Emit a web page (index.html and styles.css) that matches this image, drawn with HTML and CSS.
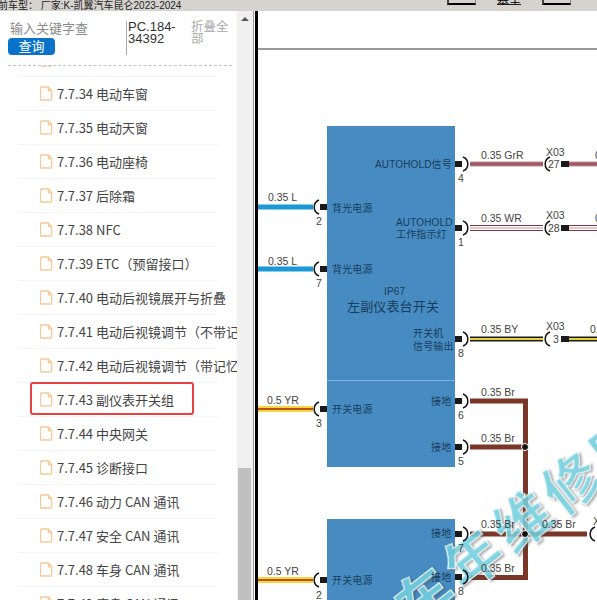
FILE: index.html
```html
<!DOCTYPE html>
<html lang="zh-CN">
<head>
    <meta charset="UTF-8">
    <meta name="viewport" content="width=device-width, initial-scale=1.0">
    <title>前车型</title>
    <link rel="stylesheet" href="styles.css">
</head>
<body>
    <svg class="icon-defs" width="0" height="0">
        <symbol id="file-icon" viewBox="0 0 14 16">
            <path d="M1.500 1h7.500l3.500 3.800v9.200a1 1 0 0 1-1 1h-10a1 1 0 0 1-1-1v-12a1 1 0 0 1 1-1z M9 1v3.800h3.500" fill="none" stroke="#f5c998" stroke-width="1.500"/>
        </symbol>
    </svg>

    <div class="top-bar">
        <div class="top-title">前车型： 厂家:K-凯翼汽车昆仑2023-2024</div>
        <div class="top-tools">
            <span class="tool-btn"></span>
            <span class="tool-text">基里</span>
            <span class="tool-btn"></span>
        </div>
    </div>

    <div class="main">
        <div class="sidebar">
            <div class="search-bar">
                <div class="search-box">
                    <div class="search-hint">输入关键字查</div>
                    <button class="search-btn">查询</button>
                </div>
                <div class="search-code">PC.184-34392</div>
                <div class="search-fold">折叠全部</div>
            </div>
            <div class="tree">
                <div class="tree-row tree-row-cut"><svg class="file-icon"><use href="#file-icon"/></svg></div>
                <div class="tree-row"><svg class="file-icon"><use href="#file-icon"/></svg><span>7.7.34 电动车窗</span></div>
                <div class="tree-row"><svg class="file-icon"><use href="#file-icon"/></svg><span>7.7.35 电动天窗</span></div>
                <div class="tree-row"><svg class="file-icon"><use href="#file-icon"/></svg><span>7.7.36 电动座椅</span></div>
                <div class="tree-row"><svg class="file-icon"><use href="#file-icon"/></svg><span>7.7.37 后除霜</span></div>
                <div class="tree-row"><svg class="file-icon"><use href="#file-icon"/></svg><span>7.7.38 NFC</span></div>
                <div class="tree-row"><svg class="file-icon"><use href="#file-icon"/></svg><span>7.7.39 ETC（预留接口）</span></div>
                <div class="tree-row"><svg class="file-icon"><use href="#file-icon"/></svg><span>7.7.40 电动后视镜展开与折叠</span></div>
                <div class="tree-row"><svg class="file-icon"><use href="#file-icon"/></svg><span>7.7.41 电动后视镜调节（不带记忆）</span></div>
                <div class="tree-row"><svg class="file-icon"><use href="#file-icon"/></svg><span>7.7.42 电动后视镜调节（带记忆）</span></div>
                <div class="tree-row tree-row-active"><svg class="file-icon"><use href="#file-icon"/></svg><span>7.7.43 副仪表开关组</span></div>
                <div class="tree-row"><svg class="file-icon"><use href="#file-icon"/></svg><span>7.7.44 中央网关</span></div>
                <div class="tree-row"><svg class="file-icon"><use href="#file-icon"/></svg><span>7.7.45 诊断接口</span></div>
                <div class="tree-row"><svg class="file-icon"><use href="#file-icon"/></svg><span>7.7.46 动力 CAN 通讯</span></div>
                <div class="tree-row"><svg class="file-icon"><use href="#file-icon"/></svg><span>7.7.47 安全 CAN 通讯</span></div>
                <div class="tree-row"><svg class="file-icon"><use href="#file-icon"/></svg><span>7.7.48 车身 CAN 通讯</span></div>
                <div class="tree-row"><svg class="file-icon"><use href="#file-icon"/></svg><span>7.7.49 底盘 CAN 通讯</span></div>
            </div>
        </div>

        <div class="scrollbar">
            <div class="scroll-up"></div>
            <div class="scroll-thumb"></div>
        </div>

        <div class="diagram">
            <svg class="diagram-svg" viewBox="258 11 339 589" width="339" height="589">
                <defs>
                    <g id="pin-right">
                        <rect x="0" y="-3" width="7" height="6" fill="#1a1a1a"/>
                        <path d="M8 -7A7.500 7.500 0 0 1 8 7" fill="none" stroke="#111" stroke-width="1.500"/>
                    </g>
                    <g id="pin-left">
                        <rect x="-7" y="-3" width="7" height="6" fill="#1a1a1a"/>
                        <path d="M-8 -7A7.500 7.500 0 0 0 -8 7" fill="none" stroke="#111" stroke-width="1.500"/>
                    </g>
                </defs>

                <line x1="258" y1="49" x2="597" y2="49" stroke="#333" stroke-width="1"/>

                <!-- модули -->
                <rect x="327" y="126" width="128" height="341" fill="#468cc2"/>
                <line x1="327" y1="380.500" x2="455" y2="380.500" stroke="#7cb0d8"/>
                <rect x="327" y="519" width="128" height="81" fill="#468cc2"/>

                <!-- провода слева -->
                <line x1="258" y1="207" x2="313" y2="207" stroke="#1b98d6" stroke-width="5"/>
                <line x1="258" y1="269" x2="313" y2="269" stroke="#1b98d6" stroke-width="5"/>
                <g class="wire-yr">
                    <line x1="258" y1="409" x2="313" y2="409" class="wire-outer"/>
                    <line x1="258" y1="409" x2="313" y2="409" class="wire-inner"/>
                    <line x1="258" y1="580" x2="313" y2="580" class="wire-outer"/>
                    <line x1="258" y1="580" x2="313" y2="580" class="wire-inner"/>
                </g>

                <!-- провода справа -->
                <g class="wire-grr">
                    <line x1="470" y1="164" x2="543" y2="164" class="wire-outer"/>
                    <line x1="470" y1="164" x2="543" y2="164" class="wire-inner"/>
                    <line x1="569" y1="164" x2="597" y2="164" class="wire-outer"/>
                    <line x1="569" y1="164" x2="597" y2="164" class="wire-inner"/>
                </g>
                <g class="wire-wr">
                    <line x1="470" y1="228" x2="543" y2="228" class="wire-outer"/>
                    <line x1="470" y1="228" x2="543" y2="228" class="wire-mid"/>
                    <line x1="470" y1="228" x2="543" y2="228" class="wire-inner"/>
                    <line x1="569" y1="228" x2="597" y2="228" class="wire-outer"/>
                    <line x1="569" y1="228" x2="597" y2="228" class="wire-mid"/>
                    <line x1="569" y1="228" x2="597" y2="228" class="wire-inner"/>
                </g>
                <g class="wire-by">
                    <line x1="470" y1="339" x2="543" y2="339" class="wire-outer"/>
                    <line x1="470" y1="339" x2="543" y2="339" class="wire-inner"/>
                    <line x1="569" y1="339" x2="597" y2="339" class="wire-outer"/>
                    <line x1="569" y1="339" x2="597" y2="339" class="wire-inner"/>
                </g>
                <path class="wire-br" d="M470 401H525.500V577.500H470M470 447H525.500M470 534H587"/>

                <text class="watermark" x="473" y="554" transform="rotate(-38 473 554)">风信车年维修网</text>

                <circle cx="525" cy="447" r="3.500" fill="#111" stroke="#fff" stroke-width="1"/>
                <circle cx="525" cy="534" r="3.500" fill="#111" stroke="#fff" stroke-width="1"/>

                <!-- разъёмы -->
                <use href="#pin-left" x="327" y="207"/>
                <use href="#pin-left" x="327" y="269"/>
                <use href="#pin-left" x="327" y="409"/>
                <use href="#pin-left" x="327" y="580"/>
                <use href="#pin-right" x="455" y="164"/>
                <use href="#pin-right" x="455" y="228"/>
                <use href="#pin-right" x="455" y="339"/>
                <use href="#pin-right" x="455" y="401"/>
                <use href="#pin-right" x="455" y="447"/>
                <use href="#pin-right" x="455" y="534"/>
                <use href="#pin-right" x="455" y="577"/>
                <path class="arc" d="M550 157A7.500 7.500 0 0 0 550 171"/>
                <path class="arc" d="M550 221A7.500 7.500 0 0 0 550 235"/>
                <path class="arc" d="M550 332A7.500 7.500 0 0 0 550 346"/>
                <path class="arc" d="M595 527A7.500 7.500 0 0 0 595 541"/>
                <rect x="561" y="161" width="8" height="6" fill="#1a1a1a"/>
                <rect x="561" y="225" width="8" height="6" fill="#1a1a1a"/>
                <rect x="561" y="336" width="8" height="6" fill="#1a1a1a"/>

                <!-- подписи проводов -->
                <g class="wire-label">
                    <text x="268" y="201">0.35 L</text>
                    <text x="268" y="265">0.35 L</text>
                    <text x="267" y="404">0.5 YR</text>
                    <text x="267" y="575">0.5 YR</text>
                    <text x="481" y="159">0.35 GrR</text>
                    <text x="481" y="222">0.35 WR</text>
                    <text x="481" y="333">0.35 BY</text>
                    <text x="481" y="396">0.35 Br</text>
                    <text x="481" y="442">0.35 Br</text>
                    <text x="481" y="528">0.35 Br</text>
                    <text x="481" y="572">0.35 Br</text>
                    <text x="542" y="528">0.35 Br</text>
                    <text x="546" y="156">X03</text>
                    <text x="546" y="219">X03</text>
                    <text x="546" y="330">X03</text>
                    <text x="593" y="525">X</text>
                    <text x="595" y="159">0</text>
                    <text x="595" y="222">0</text>
                    <text x="590" y="333">0.</text>
                    <text x="548" y="168">27</text>
                    <text x="548" y="232">28</text>
                    <text x="553" y="343">3</text>
                    <text x="316" y="225">2</text>
                    <text x="316" y="287">7</text>
                    <text x="316" y="427">3</text>
                    <text x="316" y="599">2</text>
                    <text x="458" y="182">4</text>
                    <text x="458" y="246">1</text>
                    <text x="458" y="357">8</text>
                    <text x="458" y="419">6</text>
                    <text x="458" y="465">5</text>
                    <text x="458" y="552">7</text>
                    <text x="458" y="595">8</text>
                </g>

                <!-- подписи модуля -->
                <g class="module-label">
                    <text x="375" y="168">AUTOHOLD信号</text>
                    <text x="396" y="226">AUTOHOLD</text>
                    <text x="396" y="238">工作指示灯</text>
                    <text x="332" y="212">背光电源</text>
                    <text x="332" y="273">背光电源</text>
                    <text x="413" y="337">开关机</text>
                    <text x="413" y="350">信号输出</text>
                    <text x="332" y="413">开关电源</text>
                    <text x="431" y="405">接地</text>
                    <text x="431" y="451">接地</text>
                    <text x="332" y="584">开关电源</text>
                    <text x="431" y="537">接地</text>
                    <text x="431" y="581">接地</text>
                    <text x="384" y="295">IP67</text>
                    <text class="module-name" x="347" y="311">左副仪表台开关</text>
                </g>
            </svg>
        </div>
    </div>
</body>
</html>
```

FILE: styles.css
```css
* {
    margin: 0;
    padding: 0;
    box-sizing: border-box;
}

body {
    width: 597px;
    height: 600px;
    overflow: hidden;
    background: white;
    font-family: "Liberation Sans", "Noto Sans CJK SC", sans-serif;
}

.icon-defs {
    display: block;
    height: 0;
}

.top-bar {
    height: 11px;
    background: #d6d3ce;
    display: flex;
    justify-content: space-between;
    overflow: hidden;
}

.top-title {
    font-size: 10px;
    line-height: 11px;
    margin-left: -2px;
    color: #222;
    white-space: nowrap;
}

.top-tools {
    display: flex;
    gap: 21px;
    width: 150px;
}

.tool-btn {
    width: 29px;
    height: 5px;
    border-bottom: 2px solid black;
    border-left: 2px solid #444;
    border-right: 1px solid #888;
}

.tool-text {
    width: 24px;
    height: 5px;
    font-size: 12px;
    line-height: 3px;
    border-bottom: 1px solid #222;
    overflow: hidden;
}

.main {
    display: flex;
    height: 589px;
}

.sidebar {
    width: 237px;
    flex-shrink: 0;
    overflow: hidden;
    background: white;
}

.search-bar {
    height: 55px;
    margin: 0 5px 0 8px;
    padding-top: 10px;
    border-bottom: 1px dashed #c4c4c4;
    display: flex;
    font-size: 13px;
}

.search-box {
    width: 118px;
    color: #8a8a8a;
    padding-left: 2px;
}

.search-hint {
    line-height: 16px;
}

.search-btn {
    display: block;
    width: 47px;
    height: 17px;
    margin: 1px 0 0 -2px;
    border: none;
    border-radius: 4px;
    background: #0b72c9;
    color: white;
    font-family: inherit;
    font-size: 13px;
    line-height: 17px;
}

.search-code {
    width: 65px;
    height: 34px;
    padding-left: 1px;
    border-left: 1px solid #aaa;
    color: #333;
    line-height: 12px;
    font-size: 13px;
    word-break: break-word;
}

.search-fold {
    width: 40px;
    color: #aaa;
    line-height: 12px;
    font-size: 12.500px;
}

.tree {
    height: 534px;
    overflow: hidden;
    padding-left: 18px;
}

.tree-row {
    position: relative;
    height: 34px;
    width: 199px;
    display: flex;
    align-items: center;
    padding-left: 22px;
    gap: 4px;
    border-bottom: 1px solid #f3f3f3;
    color: #444;
    font-family: "Noto Sans CJK SC", sans-serif;
    font-size: 13px;
    white-space: nowrap;
}

.tree-row-cut {
    margin-top: -23px;
}

.tree-row-active::after {
    content: "";
    position: absolute;
    left: 12px;
    top: -1px;
    width: 160px;
    height: 29px;
    border: 2px solid #e94040;
    border-radius: 3px;
}

.file-icon {
    width: 13px;
    height: 15px;
    flex-shrink: 0;
}

.scrollbar {
    width: 17px;
    flex-shrink: 0;
    background: #f0f0f0;
    border-right: 1px solid #999;
    padding-top: 6px;
    display: flex;
    flex-direction: column;
    align-items: center;
}

.scroll-up {
    width: 0;
    height: 0;
    border-left: 4px solid transparent;
    border-right: 4px solid transparent;
    border-bottom: 4px solid #555;
    margin-right: 1px;
}

.scroll-thumb {
    width: 13px;
    height: 132px;
    margin-top: 447px;
    background: #c0c0c0;
    margin-right: 1px;
}

.diagram {
    flex: 1;
    border-left: 3px solid black;
    overflow: hidden;
    min-width: 0;
    margin-left: 1px;
}

.diagram-svg {
    display: block;
    overflow: hidden;
}

.arc {
    fill: none;
    stroke: #111;
    stroke-width: 1.500;
}

.wire-outer,
.wire-mid,
.wire-inner {
    fill: none;
}

.wire-yr .wire-outer {
    stroke: #f7d53c;
    stroke-width: 6;
}

.wire-yr .wire-inner {
    stroke: #b5561e;
    stroke-width: 2;
}

.wire-grr .wire-outer {
    stroke: #a39a9a;
    stroke-width: 5;
}

.wire-grr .wire-inner {
    stroke: #b0505f;
    stroke-width: 3;
}

.wire-wr .wire-outer {
    stroke: #7a3a45;
    stroke-width: 6;
}

.wire-wr .wire-mid {
    stroke: white;
    stroke-width: 4;
}

.wire-wr .wire-inner {
    stroke: #c88d98;
    stroke-width: 1;
}

.wire-by .wire-outer {
    stroke: #1c1c10;
    stroke-width: 5;
}

.wire-by .wire-inner {
    stroke: #e6cf3a;
    stroke-width: 2;
}

.wire-br {
    fill: none;
    stroke: #7a3627;
    stroke-width: 5;
}

.wire-label text {
    font-family: "Liberation Sans", sans-serif;
    font-size: 10.500px;
    fill: #444;
}

.module-label text {
    font-family: "Liberation Sans", "Noto Sans CJK SC", sans-serif;
    font-size: 10px;
    letter-spacing: 0.150px;
    fill: #1a3c5a;
}

.module-label .module-name {
    font-size: 13px;
}

.watermark {
    font-family: "Noto Sans CJK SC", sans-serif;
    font-size: 56px;
    font-weight: 700;
    letter-spacing: 6px;
    text-anchor: middle;
    dominant-baseline: central;
    fill: #78dcec;
    fill-opacity: 0.8;
    stroke: white;
    stroke-width: 1;
    filter: drop-shadow(1px 2px 1px rgba(70, 70, 70, 0.55));
}
```
